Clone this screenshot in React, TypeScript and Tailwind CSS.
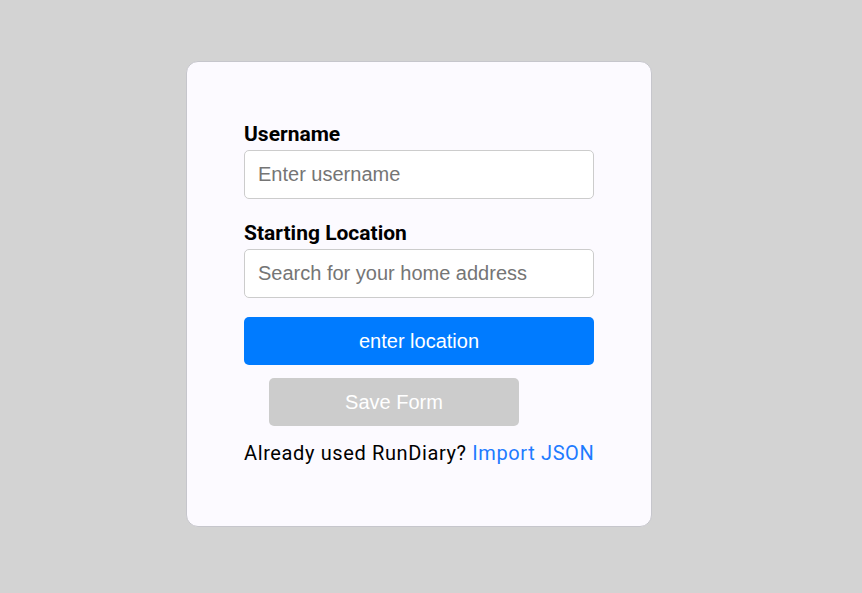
import React from "react";

export default function App() {
  return (
    <div className="w-[862px] h-[593px] bg-[#d3d3d3] pt-[61px] pl-[186px]">
      <div className="w-[466px] h-[466px] bg-[#fcfaff] border border-[#c6c6cc] rounded-[12px] px-[57px] pt-[60px] flex flex-col">
        <label className="font-['Roboto',sans-serif] font-bold text-[21px] leading-[24px] text-black">Username</label>
        <input
          className="mt-[4px] w-[350px] h-[49px] bg-white border border-[#cccccc] rounded-[5px] px-[13px] text-[20px] font-['Liberation_Sans',Arial,sans-serif] placeholder:text-[#757575] outline-none"
          placeholder="Enter username"
        />
        <label className="mt-[22px] font-['Roboto',sans-serif] font-bold text-[21px] leading-[24px] text-black">Starting Location</label>
        <input
          className="mt-[4px] w-[350px] h-[49px] bg-white border border-[#cccccc] rounded-[5px] px-[13px] text-[20px] font-['Liberation_Sans',Arial,sans-serif] placeholder:text-[#757575] outline-none"
          placeholder="Search for your home address"
        />
        <button className="mt-[19px] w-[350px] h-[48px] bg-[#007bff] rounded-[5px] text-white text-[20px] font-['Liberation_Sans',Arial,sans-serif]">
          enter location
        </button>
        <button className="mt-[13px] ml-[25px] w-[250px] h-[48px] bg-[#cccccc] rounded-[5px] text-white text-[20px] font-['Liberation_Sans',Arial,sans-serif]">
          Save Form
        </button>
        <p className="mt-[14px] font-['Roboto',sans-serif] text-[20px] leading-[26px] tracking-[0.62px] text-black whitespace-nowrap">
          Already used RunDiary? <span className="text-[#1e7bff]">Import JSON</span>
        </p>
      </div>
    </div>
  );
}
